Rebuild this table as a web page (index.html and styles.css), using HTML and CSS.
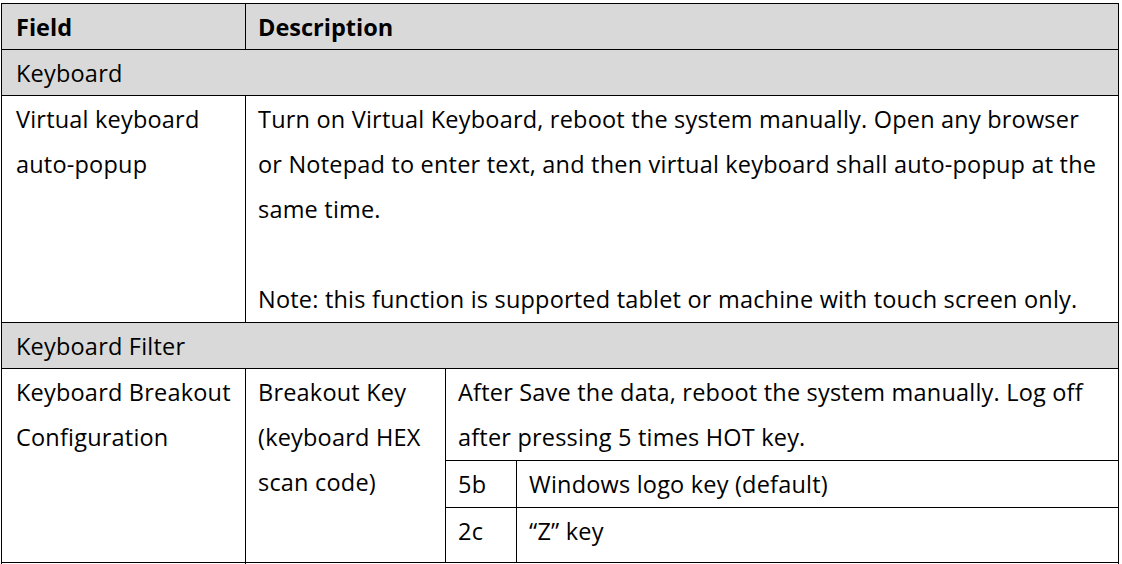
FILE: index.html
```html
<!DOCTYPE html>
<html lang="en">
<head>
<meta charset="utf-8">
<title>Keyboard settings</title>
<link rel="stylesheet" href="styles.css">
</head>
<body>
<table class="spec">
  <colgroup>
    <col class="c1">
    <col class="c2">
    <col class="c3">
    <col class="c4">
  </colgroup>
  <thead>
    <tr class="r-head">
      <th class="f">Field</th>
      <th colspan="3">Description</th>
    </tr>
  </thead>
  <tbody>
    <tr class="r-group">
      <td class="f" colspan="4">Keyboard</td>
    </tr>
    <tr class="r-virtual">
      <td class="f">Virtual keyboard<br>auto-popup</td>
      <td colspan="3">Turn on Virtual Keyboard, reboot the system manually. Open any browser<br>or Notepad to enter text, and then virtual keyboard shall auto-popup at the<br>same time.<br>&nbsp;<br>Note: this function is supported tablet or machine with touch screen only.</td>
    </tr>
    <tr class="r-group">
      <td class="f" colspan="4">Keyboard Filter</td>
    </tr>
    <tr class="r-break1">
      <td class="f" rowspan="3">Keyboard Breakout<br>Configuration</td>
      <td rowspan="3">Breakout Key<br>(keyboard HEX<br>scan code)</td>
      <td colspan="2">After Save the data, reboot the system manually. Log off<br>after pressing 5 times HOT key.</td>
    </tr>
    <tr class="r-break2">
      <td>5b</td>
      <td>Windows logo key (default)</td>
    </tr>
    <tr class="r-break3">
      <td>2c</td>
      <td>“Z” key</td>
    </tr>
    <tr class="r-next">
      <td class="f"></td>
      <td colspan="3"></td>
    </tr>
  </tbody>
</table>
</body>
</html>
```
FILE: styles.css
```css
html, body {
  margin: 0;
  padding: 0;
  background: #ffffff;
  overflow: hidden;
}

.spec {
  margin: 3px 0 0 1px;
  border-collapse: collapse;
  table-layout: fixed;
  width: 1118px;
  font-family: "Open Sans", "Liberation Sans", sans-serif;
  font-size: 23.5px;
  letter-spacing: 0.2px;
  color: #000;
}

.c1 { width: 244px; }
.c2 { width: 200px; }
.c3 { width: 71px; }
.c4 { width: auto; }

.spec th,
.spec td {
  border: 1px solid #000;
  padding: 1px 12px 0 12px;
  line-height: 44px;
  vertical-align: top;
  text-align: left;
  white-space: nowrap;
  font-weight: normal;
}

.spec .f {
  padding-left: 14px;
}

.spec th {
  font-weight: bold;
  letter-spacing: 0;
  background: #d9d9d9;
}

.r-group td { background: #d9d9d9; }
.r-virtual td { height: 225px; line-height: 45px; }
.r-break1 td { height: 89px; line-height: 45px; }
.r-break2 td { height: 45px; }
.r-break3 td { height: 53px; }
.r-next td { height: 40px; }
```
